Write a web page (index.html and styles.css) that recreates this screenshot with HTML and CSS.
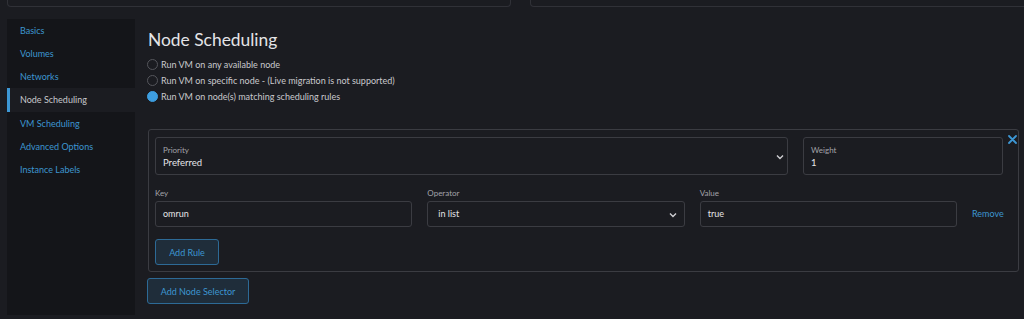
FILE: index.html
```html
<!DOCTYPE html>
<html lang="en">
<head>
    <meta charset="UTF-8">
    <meta name="viewport" content="width=device-width, initial-scale=1.0">
    <title>Node Scheduling</title>
    <link rel="stylesheet" href="styles.css">
</head>
<body>

    <div class="top-cards">
        <div class="card card-left"></div>
        <div class="card card-right"></div>
    </div>

    <div class="layout">
        <ul class="side-tabs">
            <li>Basics</li>
            <li>Volumes</li>
            <li>Networks</li>
            <li class="active">Node Scheduling</li>
            <li>VM Scheduling</li>
            <li>Advanced Options</li>
            <li>Instance Labels</li>
        </ul>

        <div class="content">
            <h2>Node Scheduling</h2>

            <div class="radio-group">
                <label class="radio"><span class="dot"></span>Run VM on any available node</label>
                <label class="radio"><span class="dot"></span>Run VM on specific node - (Live migration is not supported)</label>
                <label class="radio checked"><span class="dot"></span>Run VM on node(s) matching scheduling rules</label>
            </div>

            <div class="selector-box">
                <button class="close-btn" aria-label="Remove">
                    <svg width="9" height="9" viewBox="0 0 9 9">
                        <path d="M1 1 L8 8 M8 1 L1 8" stroke="#3d97d4" stroke-width="1.8" stroke-linecap="round"/>
                    </svg>
                </button>

                <div class="priority-row">
                    <div class="field-box select">
                        <span class="field-label">Priority</span>
                        <span class="field-value">Preferred</span>
                        <svg class="chevron" width="8" height="6" viewBox="0 0 8 6">
                            <path d="M1 1.5 L4 4.5 L7 1.5" stroke="#cfcfd3" stroke-width="1.4" fill="none"/>
                        </svg>
                    </div>
                    <div class="field-box">
                        <span class="field-label">Weight</span>
                        <span class="field-value">1</span>
                    </div>
                </div>

                <div class="rule-row">
                    <div class="rule-col">
                        <span class="rule-label">Key</span>
                        <div class="rule-input">omrun</div>
                    </div>
                    <div class="rule-col">
                        <span class="rule-label">Operator</span>
                        <div class="rule-input select">in list
                            <svg class="chevron" width="8" height="6" viewBox="0 0 8 6">
                                <path d="M1 1.5 L4 4.5 L7 1.5" stroke="#cfcfd3" stroke-width="1.4" fill="none"/>
                            </svg>
                        </div>
                    </div>
                    <div class="rule-col">
                        <span class="rule-label">Value</span>
                        <div class="rule-input">true</div>
                    </div>
                    <a class="remove-link">Remove</a>
                </div>

                <button class="btn">Add Rule</button>
            </div>

            <button class="btn btn-node">Add Node Selector</button>
        </div>
    </div>

</body>
</html>
```

FILE: styles.css
```css
* {
    box-sizing: border-box;
    margin: 0;
    padding: 0;
}
body {
    font-family: Lato, 'Noto Sans', sans-serif;
    background-color: #1b1c21;
    color: #d4d4d8;
    padding-left: 7px;
    overflow: hidden;
    height: 319px;
}
.top-cards {
    display: flex;
    gap: 19px;
    height: 7px;
    overflow: hidden;
}
.card {
    border: 1px solid #303137;
    border-top: none;
    border-radius: 0 0 4px 4px;
    height: 7px;
}
.card-left {
    width: 504px;
}
.card-right {
    flex: 1;
    margin-right: -10px;
}
.layout {
    display: flex;
    margin-top: 12px;
    height: 296px;
}
.side-tabs {
    list-style: none;
    width: 128px;
    background-color: #141519;
}
.side-tabs li {
    height: 23px;
    line-height: 23px;
    padding-left: 13px;
    font-size: 9px;
    color: #3d96d0;
}
.side-tabs li.active {
    background-color: #1b1c21;
    color: #c8c8cc;
    border-left: 3px solid #3d97d4;
    padding-left: 10px;
    height: 24px;
    line-height: 24px;
}
.content {
    flex: 1;
    padding: 11px 5px 0 13px;
}
h2 {
    font-size: 17.4px;
    font-weight: 400;
    color: #e4e4e7;
    line-height: 20px;
    margin-bottom: 6px;
}
.radio-group {
    display: flex;
    flex-direction: column;
    margin-left: -1px;
}
.radio {
    display: flex;
    align-items: center;
    height: 16px;
    font-size: 9px;
    color: #c9c9cd;
}
.dot {
    width: 11px;
    height: 11px;
    border-radius: 50%;
    border: 1px solid #55565c;
    margin-right: 3px;
}
.radio.checked .dot {
    background-color: #3d9ee0;
    border-color: #3d9ee0;
}
.selector-box {
    position: relative;
    margin-top: 25px;
    border: 1px solid #3b3c42;
    border-radius: 3px;
    padding: 7px 6px 6px 6px;
    height: 143px;
}
.close-btn {
    position: absolute;
    top: 5px;
    right: 1px;
    background: none;
    border: none;
    display: flex;
}
.priority-row {
    display: grid;
    grid-template-columns: 1fr 200px;
    gap: 15px;
    margin-right: 9px;
}
.field-box {
    position: relative;
    height: 38px;
    border: 1px solid #3b3c42;
    border-radius: 3px;
    padding: 6px 7px;
    display: flex;
    flex-direction: column;
}
.field-label {
    font-size: 8px;
    color: #a3a3a9;
    line-height: 12px;
}
.field-value {
    font-size: 9.5px;
    color: #e4e4e7;
    line-height: 14px;
}
.field-box .chevron {
    position: absolute;
    right: 3px;
    top: 16px;
}
.rule-row {
    display: grid;
    grid-template-columns: 1fr 1fr 1fr 40px;
    gap: 15px;
    margin-top: 12px;
    align-items: end;
}
.rule-col {
    display: flex;
    flex-direction: column;
}
.rule-label {
    font-size: 8px;
    color: #a3a3a9;
    line-height: 12px;
    margin-bottom: 2px;
}
.rule-input {
    position: relative;
    height: 26px;
    border: 1px solid #3b3c42;
    border-radius: 3px;
    font-size: 9px;
    color: #e4e4e7;
    line-height: 24px;
    padding-left: 7px;
}
.rule-input.select {
    padding-left: 10px;
}
.rule-input .chevron {
    position: absolute;
    right: 7px;
    top: 10px;
}
.remove-link {
    font-size: 9px;
    color: #3d96d0;
    line-height: 26px;
}
.btn {
    font-family: Lato, 'Noto Sans', sans-serif;
    font-size: 9px;
    color: #3d96d0;
    background-color: #1f2d3a;
    border: 1px solid #2d6a96;
    border-radius: 3px;
    height: 26px;
    width: 64px;
    margin-top: 12px;
}
.btn-node {
    margin-top: 6px;
    width: 102px;
    margin-left: -1px;
}
```
